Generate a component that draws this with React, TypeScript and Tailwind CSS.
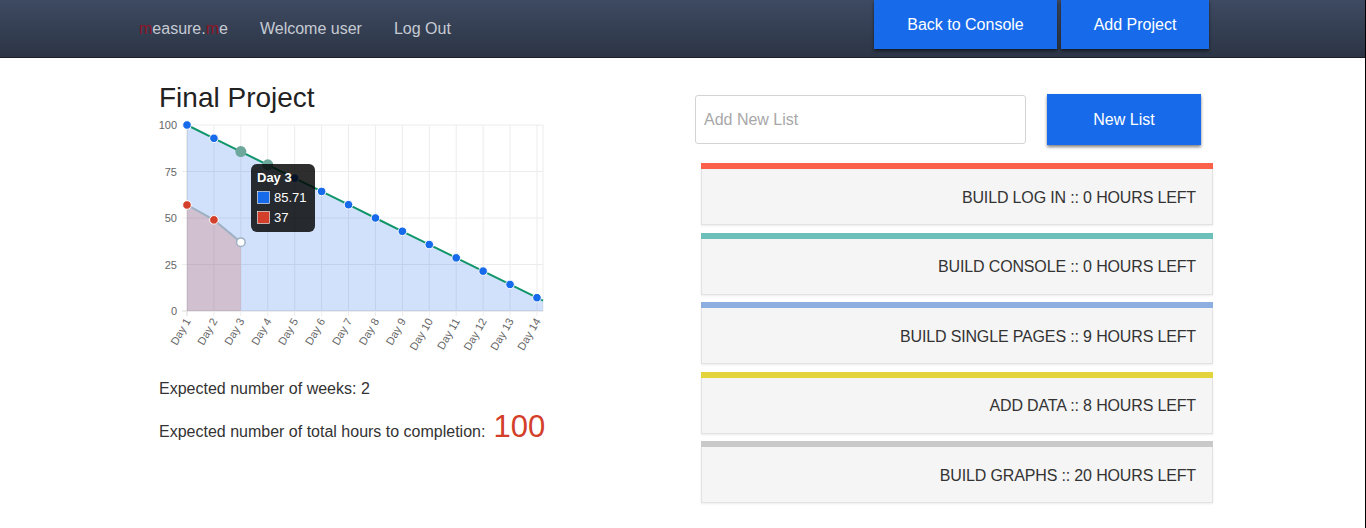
import React from 'react';

const FONT = { fontFamily: '"Liberation Sans", Arial, Helvetica, sans-serif' };

// chart geometry (svg coords, svg placed at page x=159)
const X0 = 28;
const DX = 26.92;
const YTOP = 10;
const YBOT = 196;
const XR = 384;
const sy = (v: number) => YTOP + (100 - v) * ((YBOT - YTOP) / 100);
const sx = (i: number) => X0 + i * DX;

const blue = Array.from({ length: 14 }, (_, i) => 100 - (i * 100) / 14);
const red = [57, 49, 37];

const lists = [
  { name: 'BUILD LOG IN :: 0 HOURS LEFT', color: 'bg-[#fb614a]' },
  { name: 'BUILD CONSOLE :: 0 HOURS LEFT', color: 'bg-[#6cc0b9]' },
  { name: 'BUILD SINGLE PAGES :: 9 HOURS LEFT', color: 'bg-[#8daee1]' },
  { name: 'ADD DATA :: 8 HOURS LEFT', color: 'bg-[#e3d43c]' },
  { name: 'BUILD GRAPHS :: 20 HOURS LEFT', color: 'bg-[#c9c9c9]' },
];

function Chart() {
  // line keeps going a little past day 14
  const slope = (sy(blue[13]) - sy(blue[12])) / DX;
  const yEnd = sy(blue[13]) + slope * (XR - sx(13));
  const bluePts = blue.map((v, i) => `${sx(i)},${sy(v)}`).join(' ');
  const redPts = red.map((v, i) => `${sx(i)},${sy(v)}`).join(' ');
  return (
    <svg width="400" height="250" className="block overflow-visible">
      {/* grid */}
      {[100, 75, 50, 25, 0].map((v) => (
        <g key={v}>
          <line x1={X0 - 5} x2={XR} y1={sy(v)} y2={sy(v)} stroke={v === 0 ? '#d9d9d9' : '#ececec'} />
          <text x={18} y={sy(v) + 4} textAnchor="end" fontSize="11" fill="#666">{v}</text>
        </g>
      ))}
      {Array.from({ length: 14 }, (_, i) => (
        <g key={i}>
          <line x1={sx(i)} x2={sx(i)} y1={YTOP} y2={YBOT + 5} stroke={i === 0 ? '#d9d9d9' : '#ececec'} />
          <text
            transform={`translate(${sx(i) + 4},${YBOT + 10}) rotate(-60)`}
            textAnchor="end"
            fontSize="11"
            fill="#666"
          >
            Day {i + 1}
          </text>
        </g>
      ))}
      <line x1={XR} x2={XR} y1={YTOP} y2={YBOT} stroke="#ececec" />

      {/* blue series */}
      <polygon points={`${bluePts} ${XR},${yEnd} ${XR},${YBOT} ${X0},${YBOT}`} fill="rgba(23,107,234,0.2)" />
      <polyline points={`${bluePts} ${XR},${yEnd}`} fill="none" stroke="#10956a" strokeWidth="2" />

      {/* red series */}
      <polygon points={`${redPts} ${sx(2)},${YBOT} ${X0},${YBOT}`} fill="rgba(211,63,42,0.2)" />
      <polyline points={redPts} fill="none" stroke="#9eb1c4" strokeWidth="2" />

      {blue.map((v, i) =>
        i === 2 || i === 3 ? (
          <circle key={i} cx={sx(i)} cy={sy(v)} r="5.5" fill="#6ea79c" />
        ) : (
          <circle key={i} cx={sx(i)} cy={sy(v)} r="4.3" fill="#176bea" stroke="#fff" strokeWidth="1" />
        )
      )}
      {red.map((v, i) =>
        i === 2 ? (
          <circle key={i} cx={sx(i)} cy={sy(v)} r="4.3" fill="#fff" stroke="#9eb1c4" strokeWidth="1.5" />
        ) : (
          <circle key={i} cx={sx(i)} cy={sy(v)} r="4.3" fill="#d33f2a" stroke="#fff" strokeWidth="1" />
        )
      )}

      {/* tooltip */}
      <g>
        <rect x="92" y="49" width="64" height="68" rx="6" fill="rgba(0,0,0,0.82)" />
        <text x="98" y="67" fontSize="13" fontWeight="bold" fill="#fff">Day 3</text>
        <rect x="98.5" y="76.5" width="12" height="12" fill="#176bea" stroke="#fff" strokeWidth="0.6" />
        <text x="115" y="87" fontSize="13" fill="#fff">85.71</text>
        <rect x="98.5" y="96.5" width="12" height="12" fill="#d33f2a" stroke="#fff" strokeWidth="0.6" />
        <text x="115" y="107" fontSize="13" fill="#fff">37</text>
      </g>
    </svg>
  );
}

export default function App() {
  return (
    <div className="min-h-screen bg-white border-r border-black" style={FONT}>
      {/* NAVBAR */}
      <div className="h-[58px] flex items-start bg-gradient-to-b from-[#3e4a62] to-[#2c3545] border-b border-[#1b1e23]">
        <div className="flex items-center gap-8 pl-[139px] h-[58px] text-[16px] text-[#c6cbd3]">
          <span>
            <span className="text-[#8e1626]">m</span>easure.<span className="text-[#8e1626]">m</span>e
          </span>
          <span>Welcome user</span>
          <span>Log Out</span>
        </div>
        <div className="ml-auto mr-[156px] flex gap-1">
          <button className="w-[183px] h-[49px] bg-[#176bea] text-white text-[16px] shadow-[0_2px_3px_rgba(0,0,0,0.55)]">
            Back to Console
          </button>
          <button className="w-[148px] h-[49px] bg-[#176bea] text-white text-[16px] shadow-[0_2px_3px_rgba(0,0,0,0.55)]">
            Add Project
          </button>
        </div>
      </div>

      {/* MAIN */}
      <div className="flex pl-[159px]">
        {/* left column */}
        <div className="w-[536px] pt-[24px]">
          <h1 className="text-[28px] leading-[31px] text-[#222]">Final Project</h1>
          <div className="mt-[2px]">
            <Chart />
          </div>
          <p className="mt-[12px] text-[16px] text-[#333]">Expected number of weeks: 2</p>
          <p className="mt-[11px] text-[16px] text-[#333] flex items-baseline">
            Expected number of total hours to completion:
            <span className="ml-[8px] text-[31px] leading-[30px] text-[#d33f2a]">100</span>
          </p>
        </div>

        {/* right column */}
        <div className="w-[518px] pt-[36px]">
          <div className="flex items-center gap-[21px]">
            <input
              placeholder="Add New List"
              className="w-[331px] h-[49px] border border-[#d4d4d4] rounded-[3px] px-[8px] text-[16px] placeholder:text-[#a8a8a8] outline-none"
            />
            <button className="w-[154px] h-[51px] bg-[#176bea] text-white text-[16px] shadow-[0_2px_3px_rgba(0,0,0,0.5)]">
              New List
            </button>
          </div>
          <div className="ml-[6px] mt-[18px] w-[512px] flex flex-col gap-[7.5px]">
            {lists.map((l) => (
              <div key={l.name}>
                <div className={`h-[6px] ${l.color}`} />
                <div className="h-[56px] bg-[#f5f5f5] border border-t-0 border-[#e2e2e2] shadow-[0_1px_2px_rgba(0,0,0,0.08)] flex items-center justify-end pt-[2px] pr-[16px] text-[16px] tracking-[-0.15px] text-[#333]">
                  {l.name}
                </div>
              </div>
            ))}
          </div>
        </div>
      </div>
    </div>
  );
}
